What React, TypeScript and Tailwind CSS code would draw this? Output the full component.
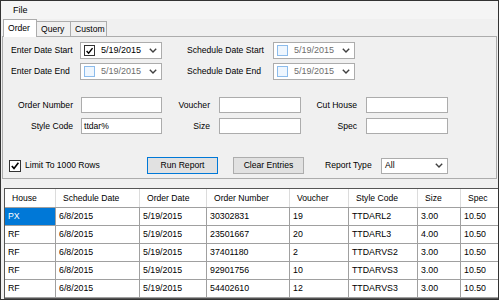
import React from "react";

function Chevron({ className = "" }: { className?: string }) {
  return (
    <svg width="8" height="5" viewBox="0 0 8 5" className={className}>
      <path d="M0.8 0.8 L4 4 L7.2 0.8" fill="none" stroke="#404040" strokeWidth="1.4" />
    </svg>
  );
}

function Check() {
  return (
    <svg width="10" height="10" viewBox="0 0 10 10">
      <path d="M1.8 5 L4 7.4 L8.4 1.8" fill="none" stroke="#000" strokeWidth="1.6" />
    </svg>
  );
}

function DatePicker({ checked }: { checked: boolean }) {
  return (
    <div className="w-[82px] h-[17px] bg-white border border-[#acacac] flex items-center">
      {checked ? (
        <div className="ml-[3px] w-[11px] h-[11px] border border-[#333] bg-white flex items-center justify-center">
          <Check />
        </div>
      ) : (
        <div className="ml-[3px] w-[11px] h-[11px] border border-[#8cbcec] bg-[#eef6fe]" />
      )}
      <span className={"ml-[6px] text-[9px] " + (checked ? "text-black" : "text-[#6d6d6d]")}>5/19/2015</span>
      <Chevron className="ml-auto mr-[4px]" />
    </div>
  );
}

function TextBox({ value = "", w = "w-[82px]" }: { value?: string; w?: string }) {
  return (
    <div className={w + " h-[16px] bg-white border border-[#acacac] flex items-center pl-[2px]"}>
      {value}
    </div>
  );
}

const cols = [
  { name: "House", w: "w-[51px]" },
  { name: "Schedule Date", w: "w-[84px]" },
  { name: "Order Date", w: "w-[67px]" },
  { name: "Order Number", w: "w-[83px]" },
  { name: "Voucher", w: "w-[59px]" },
  { name: "Style Code", w: "w-[69px]" },
  { name: "Size", w: "w-[43px]" },
  { name: "Spec", w: "flex-1" },
];

const rows = [
  ["PX", "6/8/2015", "5/19/2015", "30302831", "19", "TTDARL2", "3.00", "10.50"],
  ["RF", "6/8/2015", "5/19/2015", "23501667", "20", "TTDARL3", "4.00", "10.50"],
  ["RF", "6/8/2015", "5/19/2015", "37401180", "2", "TTDARVS2", "3.00", "10.50"],
  ["RF", "6/8/2015", "5/19/2015", "92901756", "10", "TTDARVS3", "3.00", "10.50"],
  ["RF", "6/8/2015", "5/19/2015", "54402610", "12", "TTDARVS3", "3.00", "10.50"],
];

export default function App() {
  return (
    <div className="w-[499px] h-[300px] bg-[#f0f0f0] border border-[#333] flex flex-col overflow-hidden font-['Liberation_Sans',Arial,sans-serif] text-[8.6px] text-black leading-none">
      {/* Menu bar */}
      <div className="h-[18px] bg-[#f5f5f5] flex items-center pl-[12px] shrink-0">
        <span className="text-[9px]">File</span>
      </div>
      {/* Tabs */}
      <div className="h-[17px] flex items-end pl-[2px] shrink-0 relative z-10">
        <div className="w-[34px] h-[18px] bg-white border border-b-0 border-[#acacac] flex items-center pl-[4px] -mb-px">
          Order
        </div>
        <div className="w-[34px] h-[15px] bg-[#f0f0f0] border border-b-0 border-l-0 border-[#acacac] flex items-center pl-[4px]">
          Query
        </div>
        <div className="w-[36px] h-[15px] bg-[#f0f0f0] border border-b-0 border-l-0 border-[#acacac] flex items-center pl-[4px]">
          Custom
        </div>
      </div>
      {/* Panel */}
      <div className="ml-[1px] mr-[1px] h-[143px] border border-[#acacac] bg-[#f0f0f0] flex flex-col shrink-0">
        <div className="mt-[5px] flex items-center h-[17px]">
          <span className="ml-[8px] w-[69px]">Enter Date Start</span>
          <DatePicker checked />
          <span className="ml-[25px] w-[86px]">Schedule Date Start</span>
          <DatePicker checked={false} />
        </div>
        <div className="mt-[4px] flex items-center h-[17px]">
          <span className="ml-[8px] w-[69px]">Enter Date End</span>
          <DatePicker checked={false} />
          <span className="ml-[25px] w-[86px]">Schedule Date End</span>
          <DatePicker checked={false} />
        </div>
        <div className="mt-[17px] flex items-center h-[16px]">
          <span className="w-[70px] text-right">Order Number</span>
          <div className="ml-[8px]"><TextBox w="w-[81px]" /></div>
          <span className="w-[48px] text-right">Voucher</span>
          <div className="ml-[9px]"><TextBox /></div>
          <span className="w-[56px] text-right">Cut House</span>
          <div className="ml-[9px]"><TextBox /></div>
        </div>
        <div className="mt-[5px] flex items-center h-[16px]">
          <span className="w-[70px] text-right">Style Code</span>
          <div className="ml-[8px]"><TextBox w="w-[81px]" value="ttdar%" /></div>
          <span className="w-[48px] text-right">Size</span>
          <div className="ml-[9px]"><TextBox /></div>
          <span className="w-[56px] text-right">Spec</span>
          <div className="ml-[9px]"><TextBox /></div>
        </div>
        <div className="mt-[23px] flex items-center h-[17px]">
          <div className="w-[144px] flex items-center">
            <div className="ml-[6px] w-[12px] h-[12px] border border-[#333] bg-white flex items-center justify-center">
              <Check />
            </div>
            <span className="ml-[4px]">Limit To 1000 Rows</span>
          </div>
          <div className="w-[71px] h-[17px] bg-[#e1e1e1] border border-[#0078d7] flex items-center justify-center">
            Run Report
          </div>
          <div className="ml-[15px] w-[71px] h-[17px] bg-[#e1e1e1] border border-[#adadad] flex items-center justify-center">
            Clear Entries
          </div>
          <span className="ml-[21px] w-[56px]">Report Type</span>
          <div className="w-[67px] h-[16px] bg-white border border-[#acacac] flex items-center pl-[3px]">
            All
            <Chevron className="ml-auto mr-[4px]" />
          </div>
        </div>
      </div>
      {/* Grid */}
      <div className="mt-[9px] ml-[3px] flex-1 border border-[#555] border-r-0 bg-white flex flex-col">
        <div className="h-[19px] flex border-b border-[#a0a0a0] bg-white shrink-0">
          {cols.map((c, i) => (
            <div
              key={c.name}
              className={c.w + " h-full flex items-center pl-[7px] " + (i < cols.length - 1 ? "border-r border-[#dcdcdc]" : "")}
            >
              {c.name}
            </div>
          ))}
        </div>
        {rows.map((r, ri) => (
          <div key={ri} className="h-[18px] flex border-b border-[#a0a0a0] shrink-0">
            {r.map((v, ci) => {
              const sel = ri === 0 && ci === 0;
              return (
                <div
                  key={ci}
                  className={
                    cols[ci].w +
                    " h-full flex items-center pl-[3px] text-[8.8px] " +
                    (ci < cols.length - 1 ? "border-r border-[#a0a0a0] " : "") +
                    (sel ? "bg-[#0078d7] text-white" : "")
                  }
                >
                  {v}
                </div>
              );
            })}
          </div>
        ))}
      </div>
    </div>
  );
}
